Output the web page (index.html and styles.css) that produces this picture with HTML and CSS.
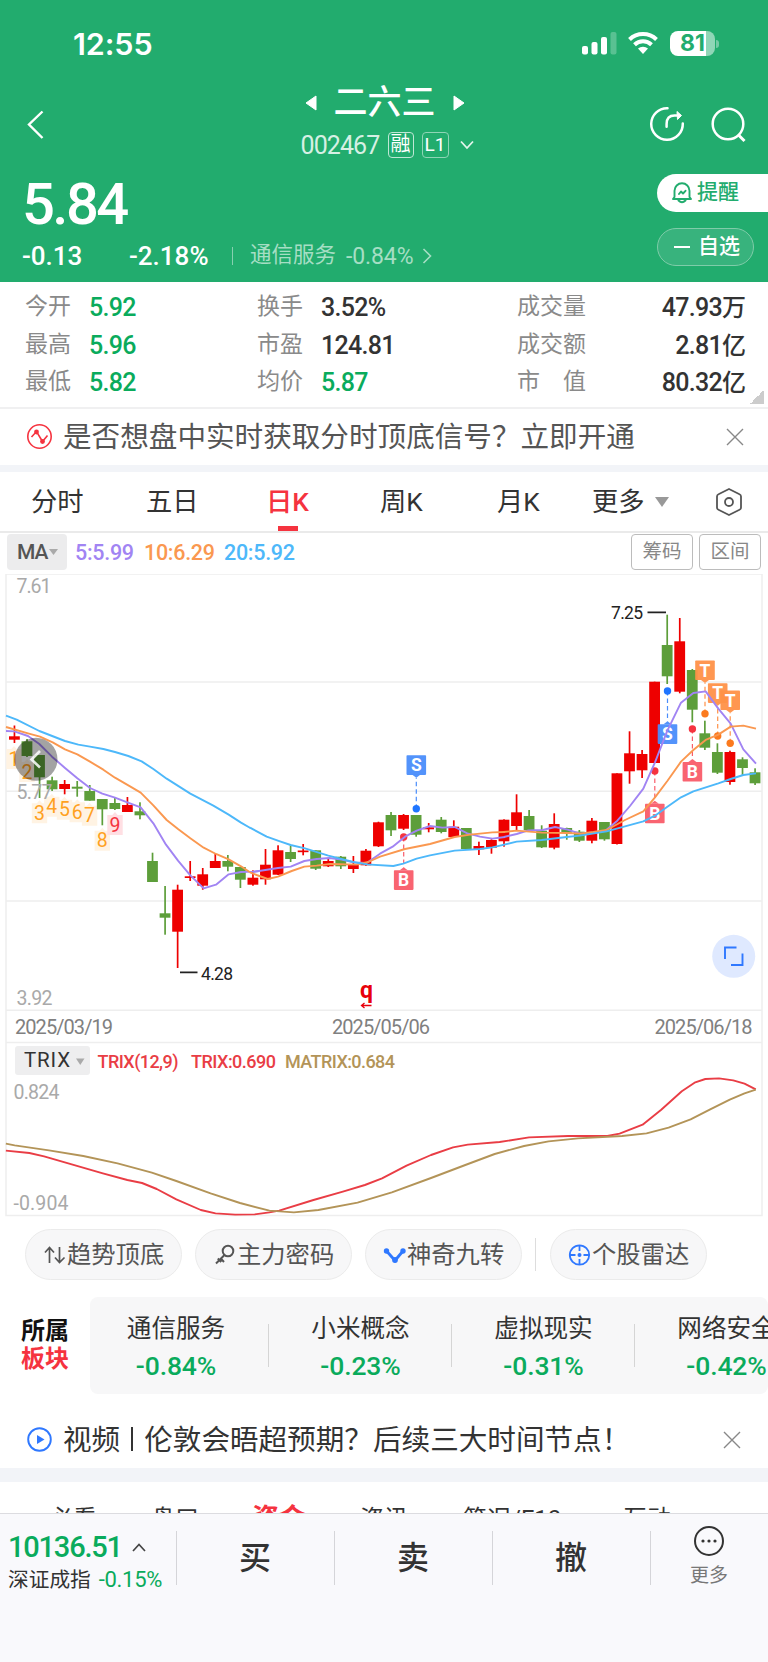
FILE: index.html
```html
<!DOCTYPE html>
<html lang="zh-CN">
<head>
<meta charset="utf-8">
<title>二六三 002467</title>
<link rel="stylesheet" href="styles.css">
</head>
<body>
<header class="header">
  <div class="status">
    <span class="clock">12:55</span>
    <svg class="signal" width="36" height="24" viewBox="0 0 36 24"><g fill="#fff"><rect x="0" y="15" width="6" height="8.500" rx="2"/><rect x="9.500" y="11" width="6" height="12.500" rx="2"/><rect x="19" y="6" width="6" height="17.500" rx="2"/><rect x="28.500" y="1" width="6" height="22.500" rx="2" opacity=".25"/></g></svg>
    <svg class="wifi" width="30" height="24" viewBox="0 0 30 24"><g fill="none" stroke="#fff" stroke-width="4"><path d="M1.500 8.500A19.500 19.500 0 0 1 28.500 8.500"/><path d="M6.500 13.700A12.500 12.500 0 0 1 23.500 13.700"/></g><path d="M15 23 10 17.600A7.500 7.500 0 0 1 20 17.600Z" fill="#fff"/></svg>
    <div class="battery"><span>81</span></div><i class="battery-nub"></i>
  </div>
  <nav class="nav">
    <svg class="back" width="18" height="30" viewBox="0 0 18 30"><path d="M16.500 1.500 3 14.500 16.500 28" fill="none" stroke="#fff" stroke-width="2.400"/></svg>
    <div class="title-block">
      <div class="title"><svg width="12" height="16"><path d="M11 1v14L1 8Z" fill="#fff" stroke="#fff" stroke-linejoin="round"/></svg><b>二六三</b><svg width="12" height="16"><path d="M1 1v14L11 8Z" fill="#fff" stroke="#fff" stroke-linejoin="round"/></svg></div>
      <div class="code"><span class="code-no">002467</span><span class="tag">融</span><span class="tag tag-l">L1</span><svg width="14" height="10"><path d="M1 1.500 7 8 13 1.500" fill="none" stroke="#e3f5ec" stroke-width="1.800"/></svg></div>
    </div>
    <div class="nav-icons">
      <svg width="36" height="36" viewBox="0 0 36 36"><g fill="none" stroke="#fff" stroke-width="2.500" stroke-linecap="round" stroke-linejoin="round"><path d="M18.500 2.200A15.800 15.800 0 1 0 33.800 17.500"/><path d="M17.600 20.700V18C17.600 12.500 20.500 9.500 25.500 9.500H30"/></g><path d="M28 5.500 32.500 9.500 28.500 13.500Z" fill="#fff" stroke="#fff" stroke-linejoin="round"/></svg>
      <svg width="36" height="38" viewBox="0 0 36 38"><g fill="none" stroke="#fff" stroke-width="2.500"><circle cx="18" cy="18" r="15.300"/><path d="m28 28.500 6.500 6.500" stroke-width="3"/></g></svg>
    </div>
  </nav>
  <div class="quote">
    <div class="quote-left">
      <div class="price num">5.84</div>
      <div class="change"><span class="num chg-a">-0.13</span><span class="num chg-b">-2.18%</span><i></i><span class="industry">通信服务</span><span class="num chg-c">-0.84%</span><svg width="10" height="16"><path d="M1.500 1 8.500 8 1.500 15" fill="none" stroke="#a6dec4" stroke-width="1.600"/></svg></div>
    </div>
    <div class="quote-right">
      <div class="remind"><svg width="20" height="22" viewBox="0 0 20 22"><g fill="none" stroke="#22ac6e" stroke-width="1.900" stroke-linejoin="round" stroke-linecap="round"><path d="M2.500 15V8.800a7.500 7.500 0 0 1 15 0V15L19 17H1Z"/><path d="M7 12 9 9.500l2 2L13.500 8.800M6.500 18.500Q10 22 13.500 18.500"/></g></svg><span>提醒</span></div>
      <div class="watch"><i></i><span>自选</span></div>
    </div>
  </div>
</header>

<section class="stats">
  <dl><dt>今开</dt><dd class="green">5.92</dd><dt>换手</dt><dd>3.52%</dd><dt>成交量</dt><dd class="right">47.93<em>万</em></dd></dl>
  <dl><dt>最高</dt><dd class="green">5.96</dd><dt>市盈</dt><dd>124.81</dd><dt>成交额</dt><dd class="right">2.81<em>亿</em></dd></dl>
  <dl><dt>最低</dt><dd class="green">5.82</dd><dt>均价</dt><dd class="green">5.87</dd><dt>市　值</dt><dd class="right">80.32<em>亿</em></dd></dl>
  <i class="corner"></i>
</section>

<section class="notice">
  <svg width="26" height="26" viewBox="0 0 26 26"><g fill="none" stroke="#f5333f" stroke-width="1.600"><circle cx="13.500" cy="12.500" r="11.700"/><path d="M5.500 13 10.500 7.500 16.500 17.500 21.500 11.500"/></g><circle cx="10.500" cy="8" r="2.400" fill="#f5333f"/><circle cx="16.500" cy="17.500" r="2.400" fill="#f5333f"/></svg>
  <span>是否想盘中实时获取分时顶底信号？立即开通</span>
  <svg class="close" width="18" height="18"><path d="M1 1 17 17M17 1 1 17" stroke="#888" stroke-width="1.400"/></svg>
</section>

<nav class="tabs">
  <span class="t1">分时</span><span class="t2">五日</span><span class="t3 active">日K</span><span class="t4">周K</span><span class="t5">月K</span><span class="t6">更多</span>
  <svg class="caret" width="14" height="10"><path d="M0 0h14L7 10Z" fill="#999"/></svg>
  <svg class="gear" width="28" height="30" viewBox="0 0 28 30"><path d="M14 2 24.500 7.300Q26 8 26 9.600V20.400Q26 22 24.500 22.700L14 28 3.500 22.700Q2 22 2 20.400V9.600Q2 8 3.500 7.300Z" fill="none" stroke="#555" stroke-width="1.800" stroke-linejoin="round"/><circle cx="14" cy="15" r="4" fill="none" stroke="#555" stroke-width="1.800"/></svg>
</nav>

<section class="ma">
  <span class="ma-chip">MA<svg width="9" height="6"><path d="M0 0h9L4.500 6Z" fill="#aaa"/></svg></span>
  <span class="ma5 num">5:5.99</span><span class="ma10 num">10:6.29</span><span class="ma20 num">20:5.92</span>
  <span class="btn">筹码</span><span class="btn">区间</span>
</section>

<svg class="chart" width="768" height="646" viewBox="0 574 768 646">
  <g stroke="#eeeeee" stroke-width="1.500" fill="none">
    <path d="M6 574H762V1215.500H6ZM6 682H762M6 791.200H762M6 901H762M6 1010.300H762M6 1042.500H762"/>
  </g>
  <g class="nine" id="nine"></g>
  <g id="candles"></g>
  <g class="marks" id="marks"></g>
  <g class="ma-lines">
    <g stroke="#a184f3">
      <polyline transform="translate(0 580) scale(.33333)" points="18,453 43,454 84,468 118,492 156,530 195,564 232,595 270,624 307,641 345,653 382,667 422,682 460,730 498,794 534,842 571,886 611,925 648,914 686,883 723,876 760,875 777,873"/>
      <polyline transform="translate(250 740) scale(.33333)" points="9,396 46,390 84,384 122,380 163,363 200,357 238,354 275,359 310,367 350,369 390,341 428,320 465,290 500,272 540,258 577,263 614,261 652,280 690,290 727,296 765,291"/>
      <polyline transform="translate(500 580) scale(.33333)" points="12,771 50,762 85,751 128,750 165,741 203,749 240,761 280,757 316,752 352,722 390,678 430,626 465,547 502,452 543,368 580,339 617,334 655,386 692,431 730,508 768,551"/>
    </g>
    <g stroke="#fa9850">
      <polyline transform="translate(0 580) scale(.33333)" points="18,441 84,460 120,470 158,487 195,508 232,523 270,545 310,569 345,593 385,616 422,638 460,676 500,720 535,748 571,775 611,803 648,822 686,838 723,859 750,877"/>
      <polyline transform="translate(250 740) scale(.33333)" points="0,397 20,405 53,417 84,410 125,393 163,380 200,377 240,372 320,374 355,366 390,350 465,327 540,312 614,291 660,284 727,277 765,276"/>
      <polyline transform="translate(500 580) scale(.33333)" points="10,756 50,752 125,758 200,759 240,761 280,756 320,750 375,720 430,694 465,652 502,603 543,545 580,510 617,480 655,464 692,440 730,437 768,446"/>
    </g>
    <g stroke="#4db8fa">
      <polyline transform="translate(0 580) scale(.33333)" points="18,407 50,419 118,453 195,483 235,494 270,500 310,507 345,516 385,528 425,544 460,567 500,596 571,641 640,677 686,704 723,728 751,744"/>
      <polyline transform="translate(250 740) scale(.33333)" points="0,263 50,290 90,304 122,315 165,325 235,347 310,366 350,373 430,378 460,371 500,356 540,346 614,332 690,327 727,322 750,317"/>
      <polyline transform="translate(500 580) scale(.33333)" points="0,797 50,785 125,780 200,771 240,767 320,754 430,724 465,707 500,682 543,652 580,634 655,610 692,597 730,585 768,580"/>
    </g>
    <polyline stroke="#e93d45" transform="translate(0 1020) scale(.4898 .33333)" points="12,392 60,399 90,409 210,460 260,480 290,489 320,507 360,538 410,570 440,580 480,584 520,583 550,577 570,572 640,540 700,515 745,495 780,475 830,437 880,405 925,382 955,374 1020,366 1080,352 1160,348 1240,348 1265,341 1312,314 1350,269 1392,214 1418,188 1440,177 1468,175 1497,181 1520,191 1543,208"/>
    <polyline stroke="#b39458" transform="translate(0 1020) scale(.4898 .33333)" points="12,371 30,376 100,391 170,408 240,430 310,458 360,483 430,520 490,549 550,572 600,577 650,570 730,548 800,517 880,474 950,435 1010,402 1070,378 1120,364 1180,355 1270,348 1320,340 1365,323 1410,298 1450,268 1490,239 1520,220 1543,209"/>
  </g>
  <g class="extreme"><path d="M647.500 612.300H666M180 972.300H197.500"/><text x="611" y="619" textLength="32">7.25</text><text x="201" y="979.500" textLength="32">4.28</text></g>
  <circle cx="36" cy="759.300" r="21.500" fill="#000" fill-opacity=".36"/>
  <path d="M40 751 31.500 759.500 40 767.500" fill="none" stroke="#fff" stroke-opacity=".85" stroke-width="2.600"/>
  <g class="axis">
    <text x="16.500" y="593" textLength="35">7.61</text><text x="16.500" y="799" textLength="36">5.77</text><text x="16.500" y="1005" textLength="36">3.92</text>
    <text x="13.500" y="1098.500" textLength="46">0.824</text><text x="13.500" y="1209.500" textLength="55">-0.904</text>
  </g>
  <text class="q" x="360" y="998">q</text><path d="M361.500 1005.500H371.500M364.500 1003 361.500 1005.500 364.500 1008" fill="none" stroke="#e8000b" stroke-width="1.300"/>
  <circle cx="733.700" cy="956.300" r="21.500" fill="#dfe9ff"/>
  <path d="M725 959V947.500H736.500M731 965H742.500V953.500" fill="none" stroke="#2f78ff" stroke-width="1.900"/>
  <g class="dates"><text x="15" y="1034" textLength="98">2025/03/19</text><text x="332" y="1034" textLength="98">2025/05/06</text><text x="654.500" y="1034" textLength="98">2025/06/18</text></g>
  <rect x="15" y="1046" width="75" height="29" rx="3" fill="#eeeeef"/>
  <text class="trix" x="24" y="1067" textLength="46">TRIX</text><path d="M76 1058.500h8.500L80.250 1065Z" fill="#aaa"/>
  <g class="trix-values"><text x="97.500" y="1068" textLength="81">TRIX(12,9)</text><text x="191" y="1068" textLength="85">TRIX:0.690</text><text x="285" y="1068" textLength="110" class="tan">MATRIX:0.684</text></g>
</svg>

<section class="pills">
  <span class="pill"><svg width="24" height="24" viewBox="0 0 24 24"><path d="M6.500 20V4.500M2 9.500 6.500 4.500 11 9.500M16.500 4V19.500M12 14.500 16.500 19.500 21.500 14.500" fill="none" stroke="#555" stroke-width="1.700"/></svg>趋势顶底</span>
  <span class="pill"><svg width="24" height="24" viewBox="0 0 24 24"><g fill="none" stroke="#555" stroke-width="2"><circle cx="15" cy="8" r="5.300"/><path d="M11.500 12 3 20.500M7.800 15.500 11 19M4.800 15.500 8.200 19"/></g></svg>主力密码</span>
  <span class="pill"><svg width="24" height="24" viewBox="0 0 24 24"><path d="M3.500 8 12 17.500 20 8" fill="none" stroke="#2f78ff" stroke-width="2.800"/><g fill="#2f78ff"><circle cx="3.500" cy="8" r="2.700"/><circle cx="12" cy="17" r="2.900"/><circle cx="20" cy="8" r="2.700"/></g></svg>神奇九转</span>
  <i></i>
  <span class="pill"><svg width="24" height="24" viewBox="0 0 24 24"><g fill="none" stroke="#2f78ff" stroke-width="1.800"><circle cx="11.500" cy="12" r="9.700"/><path d="M11.500 2V8M11.500 16V22M2 12H7.500M15.500 12H21"/></g><circle cx="11.500" cy="12" r="2" fill="#2f78ff"/></svg>个股雷达</span>
</section>

<section class="sectors">
  <div class="sector-label"><span>所属</span><span>板块</span></div>
  <div class="sector-list">
    <div><span>通信服务</span><b class="num">-0.84%</b></div>
    <div><span>小米概念</span><b class="num">-0.23%</b></div>
    <div><span>虚拟现实</span><b class="num">-0.31%</b></div>
    <div><span>网络安全</span><b class="num">-0.42%</b></div>
  </div>
</section>

<section class="notice video">
  <svg width="26" height="26" viewBox="0 0 26 26"><circle cx="13.500" cy="12.500" r="11.300" fill="none" stroke="#2f78ff" stroke-width="1.900"/><path d="M11 8 18.500 12.500 11 17Z" fill="#2f78ff"/></svg>
  <span>视频<u></u>伦敦会晤超预期？后续三大时间节点！</span>
  <svg class="close" width="18" height="18"><path d="M1 1 17 17M17 1 1 17" stroke="#888" stroke-width="1.400"/></svg>
</section>

<nav class="subtabs"><span class="s1">必看</span><span class="s2">盘口</span><span class="s3">资金</span><span class="s4">资讯</span><span class="s5">简况/F10</span><span class="s6">互动</span></nav>

<footer class="footer">
  <div class="index">
    <div class="index-top"><span class="num">10136.51</span><svg width="14" height="9"><path d="M1 8 7 1.500 13 8" fill="none" stroke="#444" stroke-width="1.700"/></svg></div>
    <div class="index-bottom"><span>深证成指</span><span class="num">-0.15%</span></div>
  </div>
  <div class="action">买</div><div class="action">卖</div><div class="action">撤</div>
  <div class="more"><svg width="32" height="32" viewBox="0 0 32 32"><circle cx="16" cy="16" r="14" fill="none" stroke="#333" stroke-width="2"/><g fill="#333"><circle cx="10" cy="16" r="1.600"/><circle cx="16" cy="16" r="1.600"/><circle cx="22" cy="16" r="1.600"/></g></svg><span>更多</span></div>
</footer>
<script src="chart.js"></script>
</body>
</html>
```
FILE: styles.css
```css
* { box-sizing: border-box; }
body { margin: 0; width: 768px; height: 1662px; overflow: hidden; background: #fff; color: #333; font-family: Roboto, "Noto Sans CJK SC", sans-serif; }
svg { display: block; flex: none; }
i, em { font-style: normal; }
.num { font-family: Roboto, sans-serif; font-weight: 500; white-space: nowrap; }
.green { color: #0aab5c; }

.header { height: 282px; background: #22ac6e; color: #fff; }
.status { height: 76px; padding: 31px 0 0 73px; display: flex; align-items: flex-start; }
.clock { width: 509px; font: 600 30.500px/26px Inter, sans-serif; letter-spacing: -.1px; }
.wifi { margin-left: 10px; }
.battery { margin-left: 12px; width: 45px; height: 25px; border-radius: 8px; background: linear-gradient(90deg, #fff 81%, #90d6b7 81%); color: #22ac6e; font: 700 23px/25px Inter, sans-serif; text-align: center; }
.battery-nub { width: 3px; height: 8px; margin: 9px 0 0 1px; border-radius: 0 3px 3px 0; background: #75c9a5; }

.nav { height: 89px; display: grid; grid-template-columns: 160px 1fr 160px; }
.back { margin: 34px 0 0 26px; }
.title-block { display: flex; flex-direction: column; align-items: center; padding-top: 2px; }
.title { height: 49px; display: flex; align-items: center; gap: 17px; margin-left: 1px; }
.title b { font-weight: 500; font-size: 34px; line-height: 49px; }
.code { height: 36px; display: flex; align-items: center; margin-left: 6px; }
.code-no { width: 80px; font-size: 25px; letter-spacing: -.9px; color: #d6f0e4; }
.tag { width: 26px; height: 26px; margin-left: 7px; border: 1.5px solid #bfe7d5; border-radius: 4px; font-size: 20px; line-height: 23px; text-align: center; }
.tag-l { width: 27px; margin-left: 8px; font-size: 19px; border-color: #8fd5b6; }
.code svg { margin-left: 11px; }
.nav-icons { display: flex; gap: 25px; padding: 30px 0 0 41px; }

.quote { display: flex; justify-content: space-between; }
.quote-left { padding-left: 22px; }
.price { height: 76px; font-size: 58px; line-height: 78px; letter-spacing: -2.600px; }
.change { height: 30px; display: flex; align-items: center; font-size: 26px; }
.chg-a { width: 107px; letter-spacing: 0; }
.chg-b { width: 103px; letter-spacing: 0; }
.change i { width: 1px; height: 18px; background: #86d0b0; margin-right: 17px; }
.industry { font-size: 21.500px; color: #a6dec4; width: 96px; line-height: 24px; margin-top: -3px; }
.change .chg-c { font-size: 23px; font-weight: 400; color: #a6dec4; width: 76px; letter-spacing: -.1px; }
.quote-right { width: 111px; padding-top: 9px; }
.remind { height: 38px; border-radius: 19px 0 0 19px; background: #fff; color: #22ac6e; display: flex; align-items: center; gap: 5px; padding-left: 15px; font-size: 21px; line-height: 34px; font-weight: 500; }
.watch { width: 97px; height: 38px; margin-top: 16px; border: 1px solid #7fcca9; border-radius: 19px; background: #38b37d; display: flex; align-items: center; font-size: 21px; line-height: 34px; font-weight: 500; padding-left: 16px; gap: 8px; }
.remind span, .watch span { margin-top: -2px; }
.watch i { width: 16px; height: 2px; background: #fff; }

.stats { position: relative; height: 127px; padding-top: 7px; border-bottom: 2px solid #f0f0f1; }
.stats dl { margin: 0; height: 37.600px; display: grid; grid-template-columns: 64px 168px 64px 196px 90px 139px; padding-left: 25px; line-height: 37px; }
.stats dt { font-size: 23px; color: #8a8a8a; line-height: 36px; }
.stats dd { margin: 0; font-size: 25px; font-weight: 500; letter-spacing: -.7px; line-height: 38.500px; }
.stats em { font-size: 24px; letter-spacing: 0; }
.stats .right { text-align: right; }
.corner { position: absolute; right: 4px; bottom: 3px; width: 14px; height: 14px; background: linear-gradient(135deg, transparent 50%, #ccc 50%); }

.notice { height: 56px; display: flex; align-items: center; padding: 0 24px 0 26px; font-size: 28.600px; color: #555; white-space: nowrap; }
.notice span { margin-left: 11px; line-height: 56px; }
.notice .close { margin-left: auto; }

.tabs { height: 68px; border-top: 7px solid #f2f4f8; border-bottom: 2px solid #eaeaea; display: flex; align-items: center; font-size: 26.300px; line-height: 60px; }
.tabs span { flex: none; height: 59px; }
.t1 { margin-left: 31px; width: 115px; }
.t2 { width: 120px; }
.t3 { width: 114px; }
.t4 { width: 117px; }
.t5 { width: 95px; }
.t6 { width: 63px; }
.active { color: #f5333f; font-weight: 500; background: linear-gradient(#f5333f, #f5333f) 12px 54px / 20px 5px no-repeat; }
.gear { margin-left: 46px; }

.ma { height: 41px; display: flex; align-items: flex-start; padding: 1px 7px 0; }
.ma-chip { width: 60px; height: 36px; background: #ececed; border-radius: 4px; display: flex; align-items: center; padding-left: 10px; font-size: 21px; font-weight: 500; letter-spacing: -1px; color: #555; gap: 2px; }
.ma .num { flex: none; font-size: 21.500px; line-height: 38px; letter-spacing: -.3px; }
.ma5 { margin-left: 8px; width: 69px; color: #a184f3; }
.ma10 { width: 80px; color: #fa9850; }
.ma20 { width: 407px; color: #4db8fa; }
.ma-chip { flex: none; }
.btn { flex: none; width: 62px; height: 36px; margin-right: 6px; border: 1.500px solid #bcbcbc; border-radius: 4px; text-align: center; font-size: 19.500px; line-height: 34px; color: #888; }

.chart { font-family: Roboto, sans-serif; }
.chart text { font-size: 19.500px; }
.axis { fill: #a9a9a9; }
.chart .dates text { font-size: 20px; fill: #808080; }
.ma-lines polyline { fill: none; stroke-width: 1.900px; vector-effect: non-scaling-stroke; stroke-linejoin: round; }
.extreme { stroke: none; fill: #222; }
.extreme path { stroke: #222; stroke-width: 1.700px; }
.chart .extreme text { font-size: 17.500px; }
.chart .q { font-size: 23px; font-weight: 700; fill: #e8000b; }
.chart .trix { font-size: 20.500px; fill: #333; }
.chart .trix-values text { font-size: 18px; fill: #e93d45; font-weight: 500; }
.chart .trix-values .tan { fill: #b39458; }
.nine text { fill: #ffa11f; text-anchor: middle; }
.chart .marks text { fill: #fff; font-weight: 700; font-size: 17.500px; text-anchor: middle; }

.pills { height: 77px; display: flex; align-items: flex-start; padding: 9px 0 0 25px; }
.pill { flex: none; width: 157px; height: 51px; margin-right: 13px; border: 1px solid #ebebeb; border-radius: 26px; background: #f7f7f8; display: flex; align-items: center; padding-left: 17px; font-size: 24.300px; line-height: 46px; color: #555; white-space: nowrap; }
.pills i { width: 1px; height: 33px; background: #ddd; margin: 9px 14px 0 0; }

.sectors { display: flex; height: 97px; }
.sector-label { width: 90px; padding: 20px 0 0 21px; font-size: 24px; font-weight: 700; line-height: 28px; color: #111; display: flex; flex-direction: column; }
.sector-label span + span { color: #f5333f; }
.sector-list { width: 678px; background: #f7f7f8; border-radius: 8px; display: flex; overflow: hidden; padding-top: 13px; }
.sector-list div { flex: none; width: 183px; display: flex; flex-direction: column; align-items: center; background: linear-gradient(#d5d5d5, #d5d5d5) 100% 14px / 1px 43px no-repeat; }
.sector-list div:first-child { width: 179px; padding-right: 7px; }
.sector-list span { font-size: 24.600px; line-height: 38px; }
.sector-list b { font-size: 26.500px; line-height: 36px; color: #0aab5c; letter-spacing: -.1px; }

.video { height: 74px; padding: 17px 27px 0 26px; color: #333; }
.video u { display: inline-block; width: 2px; height: 24px; background: #333; margin: 0 11px; vertical-align: -1px; }

.subtabs { height: 45px; overflow: hidden; border-top: 14px solid #f2f4f8; display: flex; padding: 20px 0 0 49px; font-size: 24px; line-height: 34px; white-space: nowrap; }
.subtabs span { flex: none; }
.s1 { width: 102px; }
.s2 { width: 101px; }
.s3 { width: 108px; color: #f5333f; font-weight: 700; font-size: 27px; }
.s4 { width: 103px; }
.s5 { width: 160px; }

.footer { height: 149px; border-top: 1px solid #dcdce0; background: #f9f9fc; display: flex; }
.index { width: 176px; padding: 15px 0 0 8px; white-space: nowrap; }
.index-top { display: flex; align-items: center; gap: 10px; font-size: 29px; line-height: 36px; color: #0aab5c; letter-spacing: -1.200px; }
.index-bottom { display: flex; gap: 8px; font-size: 20.700px; line-height: 30px; }
.index-bottom .num { color: #0aab5c; font-size: 22px; font-weight: 400; letter-spacing: -.3px; }
.action { width: 158px; text-align: center; font-size: 32px; font-weight: 500; line-height: 89px; background: linear-gradient(#d5d5d9, #d5d5d9) 0 17px / 1px 54px no-repeat; }
.more { flex: 1; display: flex; flex-direction: column; align-items: center; padding-top: 11px; font-size: 19px; line-height: 38px; color: #777; background: linear-gradient(#d5d5d9, #d5d5d9) 0 17px / 1px 54px no-repeat; }
```
FILE: chart.js
```js
const STEP = 12.553, FIRST = 14.4;

// color, wick top, body top, body bottom, wick bottom
const candles = `r 725.5 736.3 739.7 743|g 739 741.3 756 757|g 755 755 777.3 798|g 776.7 780.3 789.3 791|r 780 784 789 794.3
g 781 786.7 788.7 796.7|g 785 791 800.7 800.7|g 799 799 809.3 825.3|g 797.7 803 809 810|r 797 805 812 812
g 802.3 811.3 815.3 819.3|g 852.7 861 882 882|g 886 913.3 917.7 934.7|r 884.7 889.7 931.7 968|r 861 876.3 878 881
r 868 874.3 885.7 889.7|r 854 861 868 868|g 855 861 866.7 871.3|g 867 867 879.7 888|r 870.3 877.7 884.7 885.7
r 849 864.7 879.3 884.7|r 845.3 850.3 874.7 875|g 845.3 852 859 862|r 844 850.5 852.2 855.3|g 850.3 850.3 868.7 870
r 858.3 861 866.3 867|g 856 856.7 866.3 869|r 856 864 869 873|r 849 850.7 865.3 865.7|r 821.7 822.3 846.3 847
g 812 815 830.3 836|r 814 815 828.7 830|g 815 815 834.7 836.7|r 823 827.3 829.3 832.3|g 817 819.7 832 833.3
r 820.3 826.7 837 837|g 828 828 849 849.3|r 841.7 846 849.3 855|r 839.3 840 847.7 853.7|r 819.3 819.7 841.3 846.7
r 794.3 812.3 826 830|g 810 816 830 830.3|g 825.3 830.7 847.3 848|r 813.3 824 847.7 849.3|g 827.7 828 832.7 839.7
g 830 831.7 840.7 842|r 818 820.7 840.7 843.3|g 822 822 839.3 840.7|r 773.3 773.3 844 844.5|r 731.3 753.3 771.3 783.7
r 750 754 770.3 778|r 681.7 681.7 763 763|g 614.7 645 676.3 684|r 618 641.3 691.7 693.3|g 669 670 709.7 722.3
g 720.7 733.3 747.7 750|g 743.3 752 772.7 774|r 750.7 752 782 784.7|g 757.3 759.3 768 775|g 768.3 772.3 783.3 785`
  .split(/[|\n]/).map(s => s.trim().split(' '));

document.getElementById('candles').innerHTML = candles.map(([c, t, bt, bb, b], i) => {
  const x = FIRST + i * STEP, fill = c === 'r' ? '#ee0000' : '#5d9e3a';
  return `<g fill="${fill}"><rect x="${x - 0.8}" y="${t}" width="1.7" height="${b - t}"/><rect x="${x - 5.4}" y="${bt}" width="10.8" height="${bb - bt}"/></g>`;
}).join('');

// magic-nine counters: label, center x, center y
document.getElementById('nine').innerHTML = [[1, 14, 759], [2, 27, 772], [3, 39.5, 813.3], [4, 51.8, 806.7], [5, 64.5, 809.7], [6, 77.3, 812.3], [7, 89.6, 815.7], [8, 102.3, 840.7], [9, 115, 825]].map(([n, x, y]) => {
  const last = n === 9;
  return `<path d="M${x - 7.7} ${y - 10}h5l2.700 -3 2.700 3h5v20h-15.400Z" fill="${last ? '#ffdfe3' : '#fff3e3'}"/><text x="${x}" y="${y + 6.5}" ${last ? 'style="fill:#f5333f"' : ''}>${n}</text>`;
}).join('');

// trade marks: letter, x, dot y, box top, label color, dot color
document.getElementById('marks').innerHTML = [
  ['S', 416.3, 808.7, 755.3, '#4a8dfb', '#1f75ff'], ['B', 403.7, 837, 870.3, '#f95c69', '#f5333f'],
  ['S', 667.5, 691, 724.3, '#4a8dfb', '#1f75ff'], ['B', 654.8, 771, 803.7, '#f95c69', '#f5333f'], ['B', 692.4, 729, 762, '#f95c69', '#f5333f'],
  ['T', 705, 713.7, 660.5, '#ff9148', '#fb7a1e'], ['T', 717.7, 736, 683.3, '#ff9148', '#fb7a1e'], ['T', 730.2, 743.3, 690.5, '#ff9148', '#fb7a1e']
].map(([l, x, dot, top, c, d]) => {
  const down = top < dot, edge = down ? top + 22.5 : top - 3;
  const tip = down ? `M${x - 4} ${top + 19.5}h8l-4 3Z` : `M${x - 4} ${top}h8l-4 -3Z`;
  return `<path d="M${x} ${dot}V${edge}" stroke="${c}" stroke-width="1.200" stroke-dasharray="4.500 3"/>
    <circle cx="${x}" cy="${dot}" r="3.700" fill="${d}"/><g fill="${c}" fill-opacity=".95"><rect x="${x - 9.8}" y="${top}" width="19.600" height="19.600" rx=".8"/><path d="${tip}"/></g>
    <text x="${x}" y="${top + 16}">${l}</text>`;
}).join('');
```
